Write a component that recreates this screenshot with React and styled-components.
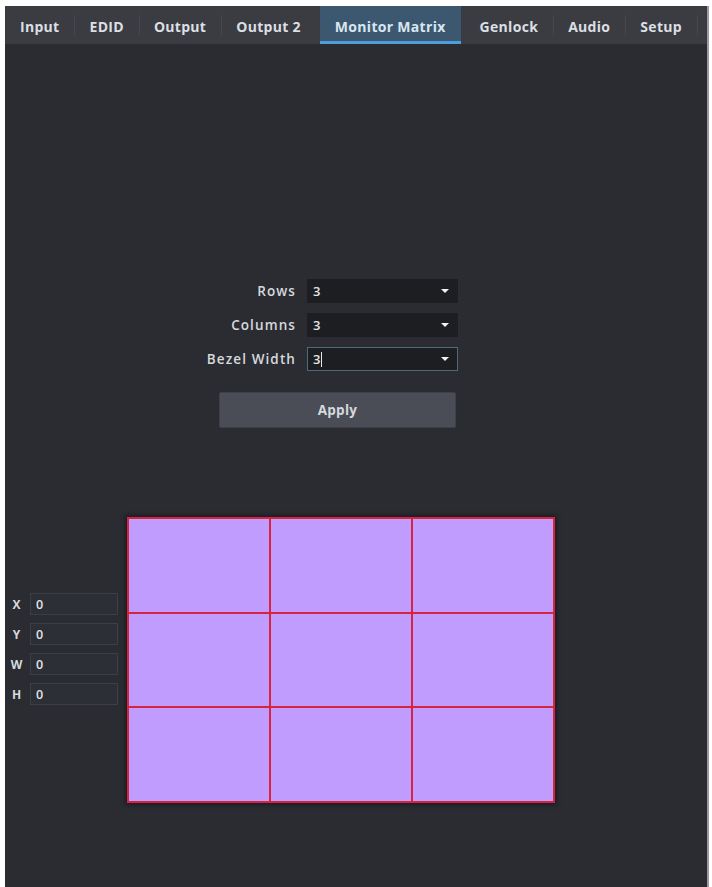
import styled, { createGlobalStyle } from 'styled-components';

const GlobalStyle = createGlobalStyle`
  html, body {
    margin: 0;
    padding: 0;
    background: #ffffff;
  }
  body {
    font-family: "Open Sans", "Liberation Sans", sans-serif;
  }
`;

const Page = styled.div`
  height: 887px;
  padding: 6px 3px 0 5px;
  box-sizing: border-box;
  display: flex;
  background: #ffffff;
`;

const Panel = styled.div`
  flex: 1;
  display: flex;
  flex-direction: column;
  background: #2a2c32;
  border-right: 2px solid #9a9ca1;
`;

const TabBar = styled.nav`
  display: flex;
  height: 38px;
  background: #3a3c42;
  align-items: stretch;
`;

const Tab = styled.div`
  display: flex;
  align-items: center;
  padding: 2px 15px 0;
  font-size: 14px;
  font-weight: 700;
  letter-spacing: 0.3px;
  color: ${(p) => (p.$active ? '#d9e6f0' : '#dcdfe3')};
  background: ${(p) => (p.$active ? '#3c5870' : 'transparent')};
  box-shadow: ${(p) => (p.$active ? 'inset 0 -3px 0 #4b9ddb' : 'none')};
  position: relative;
  margin: ${(p) => (p.$active ? '0 4px' : '0')};

  &::after {
    content: '';
    display: ${(p) => (p.$sep ? 'block' : 'none')};
    position: absolute;
    right: -1px;
    top: 9px;
    bottom: 9px;
    width: 1px;
    background: #45484e;
  }
`;

const Content = styled.div`
  flex: 1;
  display: flex;
  flex-direction: column;
  padding-top: 235px;
`;

const Form = styled.div`
  margin-left: 195px;
  display: grid;
  grid-template-columns: 96px 151px;
  column-gap: 11px;
  row-gap: 10px;
  align-items: center;
`;

const Label = styled.label`
  text-align: right;
  font-size: 13.5px;
  font-weight: 600;
  color: #d6d9dd;
  letter-spacing: 1.1px;
  white-space: nowrap;
`;

const Select = styled.div`
  height: 24px;
  box-sizing: border-box;
  display: flex;
  align-items: center;
  justify-content: space-between;
  padding: 0 8px 0 5px;
  background: #1c1e22;
  border: 1px solid ${(p) => (p.$focused ? '#4c6b78' : '#1c1e22')};
  font-size: 13px;
  font-weight: 600;
  color: #e2e4e7;
`;

const Value = styled.span`
  display: flex;
  align-items: center;
`;

const Cursor = styled.span`
  display: inline-block;
  width: 1px;
  height: 15px;
  margin-left: 1px;
  background: #e8e8e8;
`;

const Caret = styled.span`
  width: 0;
  height: 0;
  border-left: 4px solid transparent;
  border-right: 4px solid transparent;
  border-top: 4px solid #f2f2f2;
`;

const ApplyButton = styled.button`
  grid-column: 1 / 3;
  margin: 11px 2px 0 19px;
  height: 36px;
  background: #4a4d56;
  border: 1px solid #3e4148;
  border-radius: 2px;
  color: #d6d9dd;
  font-family: "Open Sans", "Liberation Sans", sans-serif;
  font-size: 13.5px;
  font-weight: 700;
  letter-spacing: 0.3px;
  cursor: pointer;
`;

const MatrixRow = styled.div`
  display: flex;
  align-items: flex-start;
  margin-top: 89px;
  padding-left: 5px;
  gap: 9px;
`;

const Coords = styled.div`
  margin-top: 76px;
  display: flex;
  flex-direction: column;
  gap: 8px;
`;

const CoordRow = styled.div`
  display: flex;
  align-items: center;
  gap: 7px;
`;

const CoordLabel = styled.span`
  width: 13px;
  text-align: center;
  font-size: 12px;
  font-weight: 700;
  color: #d6d9dd;
`;

const CoordInput = styled.div`
  width: 88px;
  height: 22px;
  box-sizing: border-box;
  padding: 0 5px;
  display: flex;
  align-items: center;
  background: #2c2f36;
  border: 1px solid #3b3e45;
  font-size: 12.5px;
  font-weight: 600;
  color: #e2e4e7;
`;

const Matrix = styled.div`
  width: 428px;
  height: 286px;
  box-sizing: border-box;
  display: grid;
  grid-template-columns: repeat(3, 1fr);
  grid-template-rows: repeat(3, 1fr);
  gap: 2px;
  padding: 2px;
  background: #d8233f;
  box-shadow: 0 0 4px 2px #1c1d22;
`;

const Cell = styled.div`
  background: #bf9cfd;
`;

const tabs = ['Input', 'EDID', 'Output', 'Output 2', 'Monitor Matrix', 'Genlock', 'Audio', 'Setup'];

export default function App() {
  return (
    <>
      <GlobalStyle />
      <Page>
        <Panel>
          <TabBar>
            {tabs.map((t, i) => {
              const active = t === 'Monitor Matrix';
              const nextActive = tabs[i + 1] === 'Monitor Matrix';
              return (
                <Tab key={t} $active={active} $sep={!active && !nextActive}>
                  {t}
                </Tab>
              );
            })}
          </TabBar>
          <Content>
            <Form>
              <Label>Rows</Label>
              <Select>
                <Value>3</Value>
                <Caret />
              </Select>
              <Label>Columns</Label>
              <Select>
                <Value>3</Value>
                <Caret />
              </Select>
              <Label>Bezel Width</Label>
              <Select $focused>
                <Value>
                  3<Cursor />
                </Value>
                <Caret />
              </Select>
              <ApplyButton>Apply</ApplyButton>
            </Form>
            <MatrixRow>
              <Coords>
                {['X', 'Y', 'W', 'H'].map((c) => (
                  <CoordRow key={c}>
                    <CoordLabel>{c}</CoordLabel>
                    <CoordInput>0</CoordInput>
                  </CoordRow>
                ))}
              </Coords>
              <Matrix>
                {Array.from({ length: 9 }).map((_, i) => (
                  <Cell key={i} />
                ))}
              </Matrix>
            </MatrixRow>
          </Content>
        </Panel>
      </Page>
    </>
  );
}
